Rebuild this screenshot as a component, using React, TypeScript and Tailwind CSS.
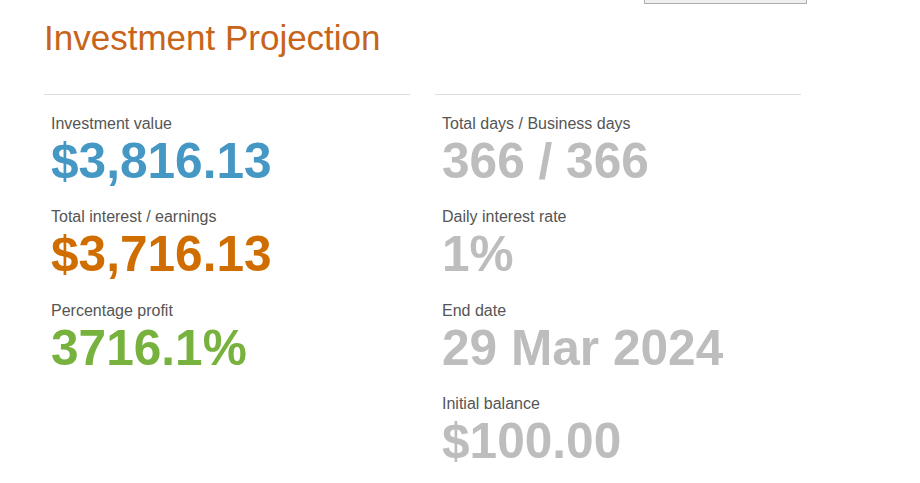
import React from 'react';

interface Stat {
  label: string;
  value: string;
  color: string;
}

const LEFT_STATS: Stat[] = [
  { label: 'Investment value', value: '$3,816.13', color: 'text-[#4597c4]' },
  { label: 'Total interest / earnings', value: '$3,716.13', color: 'text-[#d06d00]' },
  { label: 'Percentage profit', value: '3716.1%', color: 'text-[#78b23e]' },
];

const RIGHT_STATS: Stat[] = [
  { label: 'Total days / Business days', value: '366 / 366', color: 'text-[#bdbdbd]' },
  { label: 'Daily interest rate', value: '1%', color: 'text-[#bdbdbd]' },
  { label: 'End date', value: '29 Mar 2024', color: 'text-[#bdbdbd]' },
  { label: 'Initial balance', value: '$100.00', color: 'text-[#bdbdbd]' },
];

const StatColumn: React.FC<{ stats: Stat[] }> = ({ stats }) => (
  <div className="w-[366px] border-t border-[#dddddd] pt-[20px]">
    {stats.map((s) => (
      <div key={s.label} className="px-[7px] h-[93.3px]">
        <p className="text-[16px] leading-[18px] text-[#555555]">{s.label}</p>
        <p className={`mt-[4px] text-[49.6px] leading-[49px] font-bold ${s.color}`}>{s.value}</p>
      </div>
    ))}
  </div>
);

export default function App() {
  return (
    <div
      className="w-[920px] h-[483px] bg-white overflow-hidden"
      style={{ fontFamily: '"Liberation Sans", Arial, sans-serif' }}
    >
      {/* cut-off control from the section above */}
      <div className="ml-[644px] w-[163px] h-[4px] border border-t-0 border-[#adadad] bg-[#efefef]" />

      <div className="pl-[44px]">
        <h1 className="mt-[13px] text-[35px] leading-[42px] text-[#c7641a]">Investment Projection</h1>

        <div className="mt-[35px] flex gap-[25px]">
          <StatColumn stats={LEFT_STATS} />
          <StatColumn stats={RIGHT_STATS} />
        </div>
      </div>
    </div>
  );
}
